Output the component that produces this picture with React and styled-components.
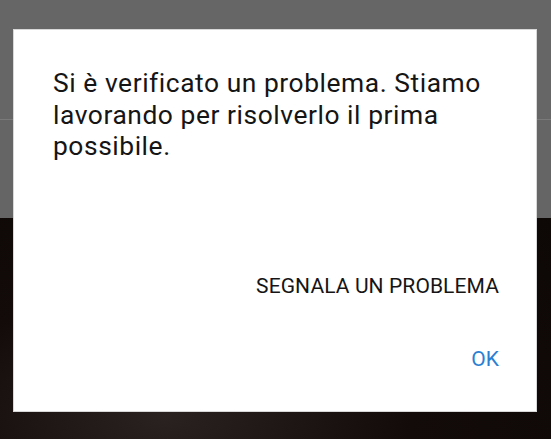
import React from "react";
import styled, { createGlobalStyle } from "styled-components";

const GlobalStyle = createGlobalStyle`
  html, body {
    margin: 0;
    padding: 0;
    width: 551px;
    height: 439px;
    overflow: hidden;
    font-family: Roboto, "Noto Sans", "Liberation Sans", sans-serif;
  }
`;

const Screen = styled.div`
  position: relative;
  width: 551px;
  height: 439px;
  display: flex;
  flex-direction: column;
`;

const TopBar = styled.div`
  height: 119px;
  background: #666666;
  border-bottom: 1px solid #7a7a7a;
`;

const SubBar = styled.div`
  height: 98px;
  background: #656565;
`;

const Video = styled.div`
  flex: 1;
  background: radial-gradient(ellipse at 30% 90%, #2a2220 0%, #120b09 45%, #0d0706 100%);
`;

const Dialog = styled.div`
  position: absolute;
  left: 13px;
  top: 29px;
  width: 524px;
  height: 383px;
  box-sizing: border-box;
  background: #ffffff;
  border: 1px solid #d8d8d8;
  padding: 38px 37px 0 39px;
  display: flex;
  flex-direction: column;
`;

const Message = styled.p`
  margin: 0;
  font-size: 26.4px;
  line-height: 31.5px;
  color: #151515;
  letter-spacing: 0.55px;
`;

const Actions = styled.div`
  margin-top: 111px;
  display: flex;
  flex-direction: column;
  align-items: flex-end;
  gap: 49px;
`;

const ActionButton = styled.button`
  border: none;
  background: none;
  padding: 0;
  font-family: inherit;
  font-size: 21px;
  line-height: 24px;
  letter-spacing: 0.1px;
  color: ${(props) => (props.primary ? "#2b7fd3" : "#151515")};
`;

const App = () => {
  return (
    <>
      <GlobalStyle />
      <Screen>
        <TopBar />
        <SubBar />
        <Video />
        <Dialog>
          <Message>
            Si è verificato un problema. Stiamo lavorando per risolverlo il
            prima possibile.
          </Message>
          <Actions>
            <ActionButton>SEGNALA UN PROBLEMA</ActionButton>
            <ActionButton primary>OK</ActionButton>
          </Actions>
        </Dialog>
      </Screen>
    </>
  );
};

export default App;
